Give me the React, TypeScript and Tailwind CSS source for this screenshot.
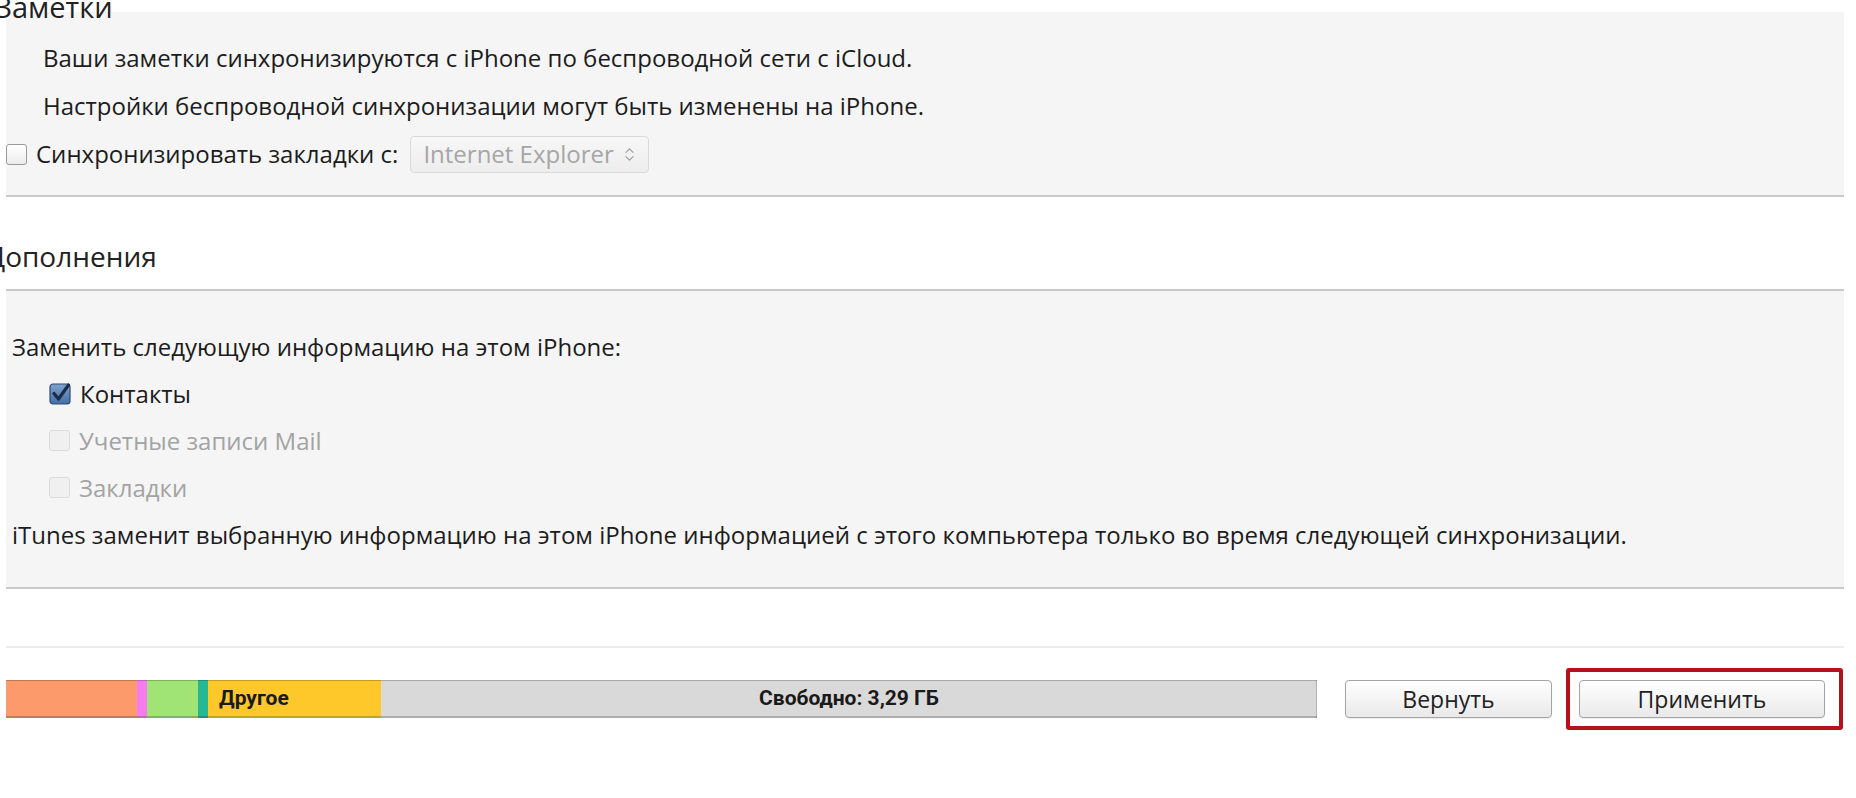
import { ChevronsUpDown } from "lucide-react";

const font = "font-['Open_Sans',_'Noto_Sans',_sans-serif]";

const segments = [
  { w: 131, color: "bg-[#fd9a6c]" },
  { w: 10, color: "bg-[#f57cf0]" },
  { w: 51, color: "bg-[#9fe474]" },
  { w: 10, color: "bg-[#25b896]" },
];

const Box = ({ checked, disabled }: { checked?: boolean; disabled?: boolean }) => {
  if (checked) {
    return (
      <svg width="23" height="23" viewBox="0 0 23 23" className="shrink-0">
        <defs>
          <linearGradient id="cb" x1="0" y1="0" x2="0" y2="1">
            <stop offset="0" stopColor="#7fa3cf" />
            <stop offset="1" stopColor="#426fa6" />
          </linearGradient>
        </defs>
        <rect x="1" y="2" width="20" height="20" rx="3" fill="url(#cb)" stroke="#2b4a74" strokeWidth="1.2" />
        <path d="M5 11.5 L9.5 17 L19.5 3" fill="none" stroke="#1a2c48" strokeWidth="3.2" strokeLinecap="round" strokeLinejoin="round" />
      </svg>
    );
  }
  return (
    <div
      className={
        disabled
          ? "w-[21px] h-[21px] shrink-0 rounded-[3px] border border-[#dcdcdc] bg-[#f0f0f0]"
          : "w-[21px] h-[21px] shrink-0 rounded-[3px] border border-[#9a9a9a] bg-gradient-to-b from-white to-[#ececec]"
      }
    />
  );
};

const Button = ({ label, className }: { label: string; className: string }) => (
  <div
    className={`h-[38px] flex items-center justify-center rounded-[4px] border border-[#a4a4a4] bg-gradient-to-b from-white to-[#e9e9e9] text-[23px] text-[#222] shadow-[0_1px_1px_rgba(0,0,0,0.08)] ${className}`}
  >
    {label}
  </div>
);

export default function App() {
  return (
    <div className={`w-[1856px] h-[798px] overflow-hidden bg-white text-[#1c1c1c] ${font}`}>
      {/* top heading, scrolled mostly out of view */}
      <div className="h-[12px] flex">
        <div className="-mt-[11px] -ml-[5px] text-[29px] leading-[36px] text-[#222]">Заметки</div>
      </div>

      <div className="ml-[6px] mr-[12px] bg-[#f5f5f5] pt-[22px] pb-[17px] text-[24px]">
        <div className="h-[48px] flex items-center pl-[37px]">
          Ваши заметки синхронизируются с iPhone по беспроводной сети с iCloud.
        </div>
        <div className="h-[48px] flex items-center pl-[37px]">
          Настройки беспроводной синхронизации могут быть изменены на iPhone.
        </div>
        <div className="h-[48px] flex items-center">
          <Box />
          <span className="ml-[9px]">Синхронизировать закладки с:</span>
          <div className="ml-[12px] w-[239px] h-[37px] flex items-center justify-between pl-[12px] pr-[10px] rounded-[4px] border border-[#dadada] bg-gradient-to-b from-[#f7f7f7] to-[#ededed] text-[#a6a6a6]">
            <span>Internet Explorer</span>
            <ChevronsUpDown size={17} strokeWidth={1.6} className="text-[#9d9d9d]" />
          </div>
        </div>
      </div>
      <div className="ml-[6px] mr-[12px] h-[2px] bg-[#cacaca]" />

      <div className="h-[92px] flex items-end pb-[15px]">
        <div className="-ml-[14px] text-[28px] leading-[36px] text-[#222]">Дополнения</div>
      </div>
      <div className="ml-[6px] mr-[12px] h-[2px] bg-[#cacaca]" />

      <div className="ml-[6px] mr-[12px] bg-[#f5f5f5] pt-[32px] pb-[29px] text-[24px]">
        <div className="h-[47px] flex items-center pl-[6px]">Заменить следующую информацию на этом iPhone:</div>
        <div className="h-[47px] flex items-center pl-[43px] gap-[8px]">
          <Box checked />
          <span>Контакты</span>
        </div>
        <div className="h-[47px] flex items-center pl-[43px] gap-[9px] text-[#a3a3a3]">
          <Box disabled />
          <span>Учетные записи Mail</span>
        </div>
        <div className="h-[47px] flex items-center pl-[43px] gap-[9px] text-[#a3a3a3]">
          <Box disabled />
          <span>Закладки</span>
        </div>
        <div className="h-[47px] flex items-center pl-[6px]">
          iTunes заменит выбранную информацию на этом iPhone информацией с этого компьютера только во время следующей синхронизации.
        </div>
      </div>
      <div className="ml-[6px] mr-[12px] h-[2px] bg-[#cacaca]" />

      <div className="mt-[57px] ml-[6px] mr-[12px] h-[2px] bg-[#ededed]" />

      <div className="mt-[20px] ml-[6px] flex items-center">
        <div className="w-[1311px] h-[38px] flex font-['Roboto',_sans-serif] font-bold text-[21px] text-[#1a1a1a]">
          {segments.map((s, i) => (
            <div
              key={i}
              className={`h-full shadow-[inset_0_1px_0_rgba(0,0,0,0.22),inset_0_-2px_0_rgba(0,0,0,0.2)] ${s.color}`}
              style={{ width: s.w }}
            />
          ))}
          <div className="w-[173px] h-full flex items-center pl-[11px] bg-[#fec72a] shadow-[inset_0_1px_0_rgba(0,0,0,0.22),inset_0_-2px_0_rgba(0,0,0,0.2)]">
            Другое
          </div>
          <div className="flex-1 h-full flex items-center justify-center bg-[#d9d9d9] shadow-[inset_0_1px_0_rgba(0,0,0,0.22),inset_0_-2px_0_rgba(0,0,0,0.2),inset_-1px_0_0_rgba(0,0,0,0.18)]">
            Свободно: 3,29 ГБ
          </div>
        </div>

        <Button label="Вернуть" className="ml-[28px] w-[207px]" />

        <div className="ml-[14px] w-[277px] h-[62px] flex items-center pl-[9px] rounded-[3px] border-[4px] border-[#b3121b]">
          <Button label="Применить" className="w-[246px]" />
        </div>
      </div>
    </div>
  );
}
